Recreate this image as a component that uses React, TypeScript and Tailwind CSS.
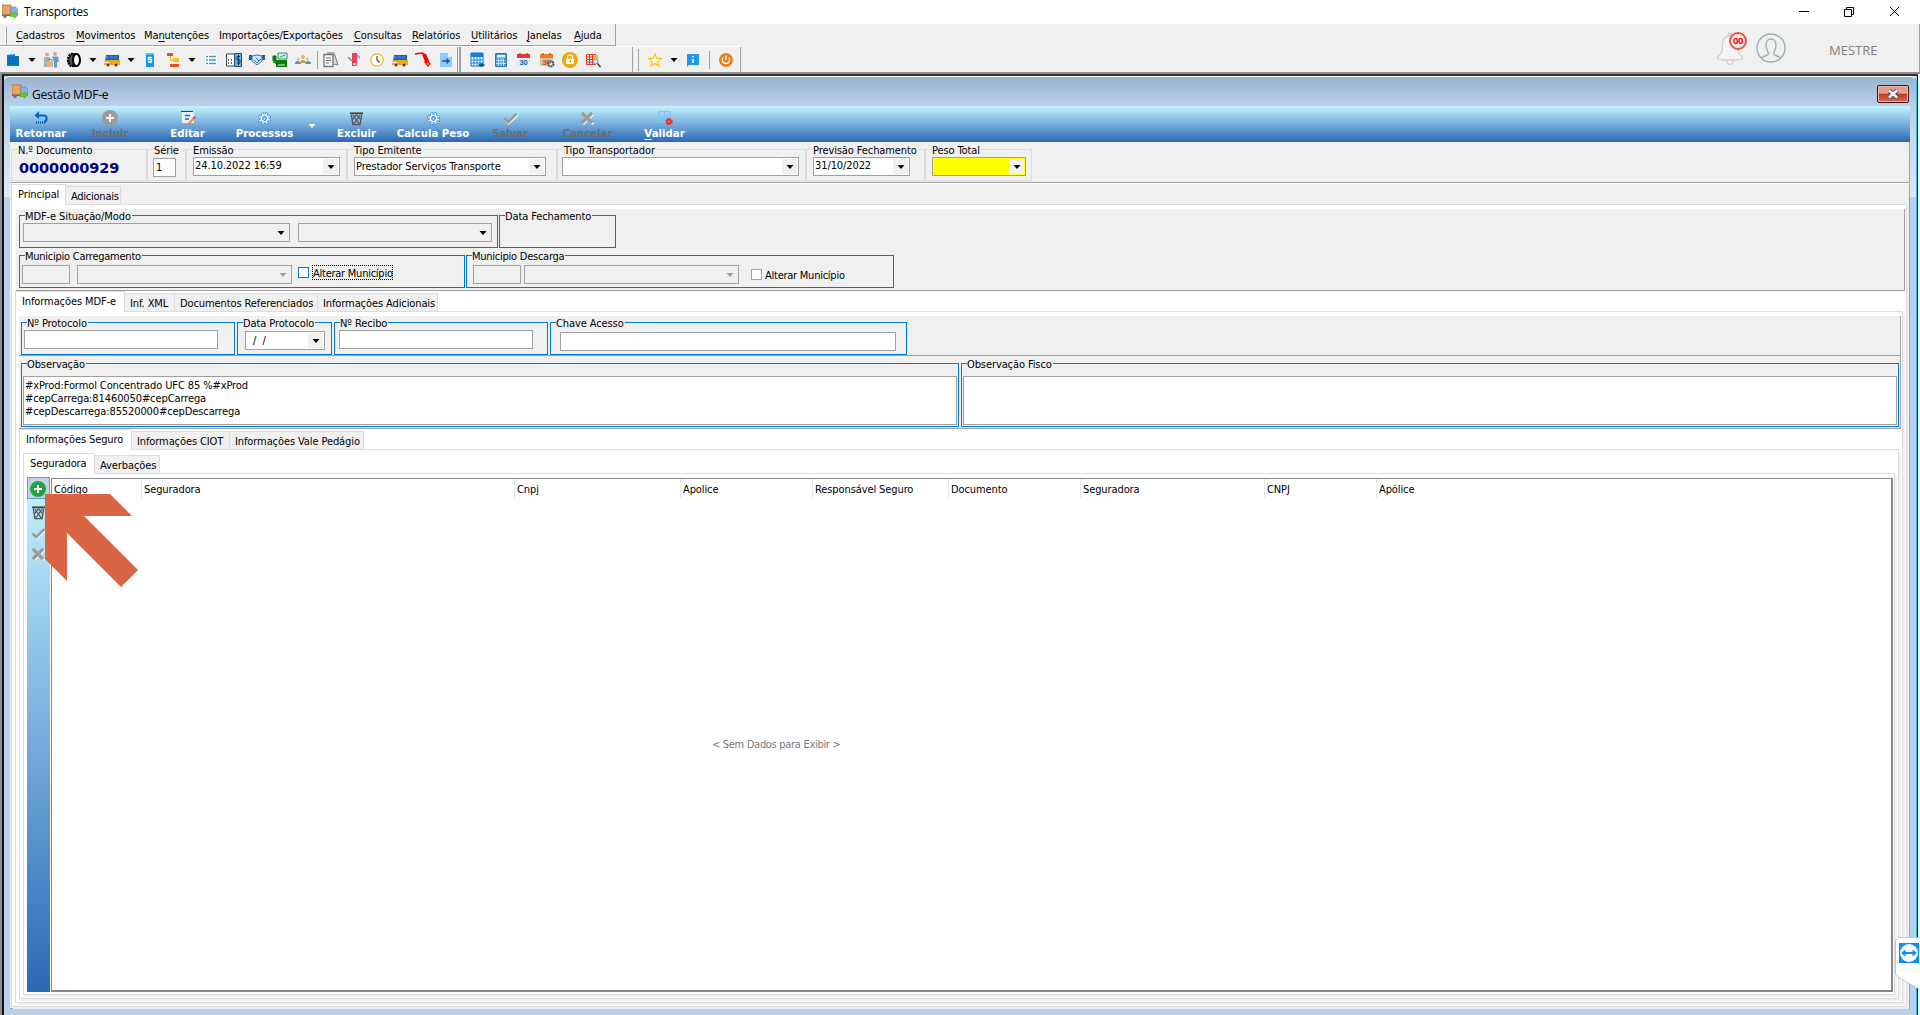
import type { ReactNode } from 'react';
import clsx from 'clsx';

/* ---------- icons ---------- */

function Svg({ children, s = 16 }: { children: ReactNode; s?: number }) {
  return (
    <svg width={s} height={s} viewBox="0 0 16 16" fill="none" className="shrink-0">
      {children}
    </svg>
  );
}

const Truck = () => (
  <Svg>
    <path d="M0 1h9v10H0z" fill="#e8a35c" stroke="#a9713c" strokeWidth=".8" />
    <path d="M9 3h5l1.500 3v5H9z" fill="#7db7e6" stroke="#4b88bb" strokeWidth=".6" />
    <path d="M0 10.500h9V12H0z" fill="#6b6b6b" />
    <circle cx="3" cy="12.500" r="1.700" fill="#777" />
    <path d="M8 9.500h4V7.500l4 3.500-4 3.500v-2H8z" fill="#6fc52b" stroke="#4d9a1d" strokeWidth=".5" />
  </Svg>
);

const Building = () => (
  <Svg>
    <path d="M2 3l8-1v2h4v10H2z" fill="#0a7fd6" />
    <path d="M2 6h12M2 8.500h12M2 11h12M5 4v10M8 4v10M11 4v10" stroke="#0560b0" strokeWidth=".8" />
  </Svg>
);

const People = () => (
  <Svg>
    <circle cx="4" cy="2.500" r="1.900" fill="#d9a877" />
    <circle cx="12" cy="2" r="1.900" fill="#d9a877" />
    <path d="M1 5h6v5H5v5H1z" fill="#9fb4bb" />
    <path d="M9 4.500h6l1 5-2 1v5h-3v-6z" fill="#5b9fd4" />
    <path d="M4 9h6v6H4z" fill="#e9b184" />
    <path d="M5 9V7.500h4V9" stroke="#b98058" />
  </Svg>
);

const Tire = () => (
  <Svg>
    <ellipse cx="6" cy="8" rx="3.800" ry="6" fill="#555" stroke="#000" strokeWidth="2.600" strokeDasharray="2 .7" />
    <ellipse cx="10.500" cy="8" rx="3.500" ry="6" fill="#fff" stroke="#000" strokeWidth="2" />
    <path d="M6 2h4M6 14h4" stroke="#000" strokeWidth="1.500" />
  </Svg>
);

const Bus = () => (
  <Svg>
    <path d="M2 3h13v6H1z" fill="#1c5fa8" />
    <path d="M2 4h3v3H2zM6 4h3v3H6zM10 4h3v3h-3z" fill="#2f7ed0" />
    <path d="M1 8h15v5H0z" fill="#f3a81c" />
    <path d="M1 10h4v1H1z" fill="#fff" />
    <circle cx="4" cy="13" r="1.500" fill="#444" />
    <circle cx="12" cy="13" r="1.500" fill="#444" />
  </Svg>
);

const MoneyBook = () => (
  <Svg>
    <path d="M4 1h8v14H4z" fill="#1596e8" />
    <path d="M4 1h8v2H4z" fill="#42c5f5" />
    <path d="M10 5.500H6.500v2h3v2.500H6" stroke="#fff" strokeWidth="1.300" />
  </Svg>
);

const OrgChart = () => (
  <Svg>
    <path d="M2 1h6v3H2z" fill="#e2502b" />
    <path d="M8 6h6v4H8z" fill="#f6c21f" />
    <path d="M5 12h9v3H5z" fill="#e2502b" />
    <path d="M5.500 4v4.500H8" stroke="#f6b21f" />
  </Svg>
);

const List = () => (
  <Svg>
    <path d="M2 2h12v12H2z" fill="#fff" />
    <path d="M3 4.500h2M3 8h2M3 11.500h2" stroke="#0fa7c0" strokeWidth="1.500" />
    <path d="M6 4.500h7M6 8h7M6 11.500h7" stroke="#3b97c9" strokeWidth="1.500" />
  </Svg>
);

const Ledger = () => (
  <Svg>
    <path d="M.5 2h8v12h-8z" fill="#fff" stroke="#444" />
    <path d="M8.500 1.500h7v13h-7z" fill="#5fb1ee" stroke="#244f74" />
    <path d="M2 8h1M5 8h1M2 11h1M5 11h1" stroke="#333" strokeWidth="1.500" />
    <path d="M14 4.500h-3V8h3v3h-3M12.500 3v10" stroke="#16395a" />
  </Svg>
);

const Handshake = () => (
  <Svg>
    <path d="M0 3h3v5H0zM13 3h3v5h-3z" fill="#1d5fa5" />
    <path d="M3 4l5-1 5 1v5l-5 4-5-4z" fill="#cfe4f6" stroke="#2d7cc4" />
    <path d="M5 8l3 3 4-4M7 6l3 3" stroke="#2d7cc4" />
  </Svg>
);

const Register = () => (
  <Svg>
    <path d="M6 1h9v6H6z" fill="#c9efe9" stroke="#15803d" strokeWidth=".8" />
    <path d="M8 5l5-2" stroke="#2f8fd0" />
    <path d="M4 8h11v7H4z" fill="#0b7a0b" />
    <path d="M1 4h3v5H1zM1 10h4v3" fill="#0b7a0b" stroke="#0b7a0b" />
    <path d="M6 13h7" stroke="#cfe" />
  </Svg>
);

const Team = () => (
  <Svg>
    <circle cx="8" cy="5" r="2" fill="#e8b366" />
    <circle cx="3.500" cy="7" r="1.600" fill="#e6c08a" />
    <circle cx="12.500" cy="7" r="1.600" fill="#e6c08a" />
    <path d="M5 11c0-4 6-4 6 0z" fill="#c3a33c" />
    <path d="M0 12c0-4 5-4 6 0zM10 12c1-4 6-4 6 0z" fill="#5a8fbf" />
  </Svg>
);

const Papers = () => (
  <Svg>
    <path d="M4 1h7l4 12-4-1" fill="#ddd" stroke="#777" />
    <path d="M1 2.500h9v12H1z" fill="#f4f4f4" stroke="#777" strokeWidth="1.300" />
    <path d="M3 6h5M3 8.500h5M3 11h3" stroke="#777" />
  </Svg>
);

const RedTool = () => (
  <Svg>
    <path d="M6 1h5v13H6z" fill="#ee3d55" />
    <path d="M7.500 11h2v2h-2z" fill="#fff" />
    <path d="M2 5l4 4M11 3l3 3" stroke="#9a8a8a" strokeWidth="1.500" />
  </Svg>
);

const Clock = () => (
  <Svg>
    <circle cx="8" cy="8" r="6.200" fill="#fff" stroke="#f0bd1b" strokeWidth="1.300" />
    <path d="M8 4v4l2.500 2.500" stroke="#444" strokeWidth="1.200" />
  </Svg>
);

const Pump = () => (
  <Svg>
    <path d="M0 2l7-1 4 3" stroke="#f00" strokeWidth="1.300" />
    <path d="M7 1l4 1 3 7-3 3-3-7z" fill="#f00" />
    <path d="M12 8l3 4-2 2-3-4z" stroke="#f00" strokeWidth="1.300" />
  </Svg>
);

const FileArrow = () => (
  <Svg>
    <path d="M2 1h8l4 4v10H2z" fill="#90caf9" />
    <path d="M10 1l4 4h-4z" fill="#e1f5fe" />
    <path d="M4 9h7M8.500 6.500L11 9l-2.500 2.500" stroke="#1557b0" strokeWidth="1.300" />
  </Svg>
);

const BlueCalendar = () => (
  <Svg>
    <path d="M1 1h12v13H1z" fill="#fff" stroke="#0a6cc0" />
    <path d="M1 1h12v4H1z" fill="#0a7fd6" />
    <path d="M1 8h12M1 11h12M4 5v9M7 5v9M10 5v9" stroke="#0a8ad6" />
    <ellipse cx="11.500" cy="13" rx="3" ry="1.700" fill="#075a86" />
  </Svg>
);

const Calculator = () => (
  <Svg>
    <path d="M2.500 1.500h11v13h-11z" fill="#4b9ad8" stroke="#2676b9" />
    <path d="M4 3h8v2.500H4z" fill="#e6f3fc" />
    <path d="M5.500 6.500V14M8 6.500V14M10.500 6.500V14M3 8.500h10M3 11.500h10" stroke="#dceefa" strokeWidth=".8" />
    <path d="M11 7h1.500v1.500H11z" fill="#c63d2f" />
  </Svg>
);

const Calendar30 = ({ gear }: { gear?: boolean }) => (
  <Svg>
    <path d="M1 2h13v4H1z" fill={gear ? '#f07c1e' : '#e5392e'} />
    <path d="M1 6h13v8H1z" fill={gear ? '#d8c0a8' : '#dceefb'} />
    <path d="M4 1v2M11 1v2" stroke="#8a3029" />
    <text x="7.500" y="12.500" textAnchor="middle" fontFamily="Liberation Sans" fontWeight="700" fontSize="7.500" fill={gear ? '#d4452e' : '#1b5fa8'}>
      30
    </text>
    {gear && <circle cx="12" cy="12" r="2.500" fill="#eee" stroke="#456" strokeWidth="2" strokeDasharray="2 .5" />}
  </Svg>
);

const Lock = () => (
  <Svg>
    <circle cx="8" cy="8" r="8" fill="#e6ac14" />
    <path d="M4 7h8v5H4z" fill="#fff" />
    <path d="M5.500 7V5c0-2.500 5-2.500 5 0v2" stroke="#fff" strokeWidth="1.200" />
    <path d="M7.500 8.500h1.500v2H7.500z" fill="#c58b00" />
  </Svg>
);

const GridSearch = () => (
  <Svg>
    <path d="M1.500 2.500h9v10h-9zM1.500 5h9M1.500 7.500h9M1.500 10h9M4.500 2.500v10M7.500 2.500v10" stroke="#e23a2a" />
    <path d="M9 3h4v5H9z" fill="#f4bd25" />
    <circle cx="10.500" cy="9.500" r="2.500" fill="#cfe8f8" stroke="#6c9ab8" />
    <path d="M12.500 11.500l3 3.500" stroke="#333" strokeWidth="1.300" />
  </Svg>
);

const Star = () => (
  <Svg>
    <path d="M8 2l1.700 4.200 4.600.3-3.500 3 1.100 4.500L8 11.500 4.100 14l1.100-4.500-3.500-3 4.600-.3z" fill="#fffbe6" stroke="#fdc812" strokeWidth="1.300" />
  </Svg>
);

const Info = () => (
  <Svg>
    <path d="M2 2h12v11H4l-2 2z" fill="#2196f3" />
    <path d="M8 4v1.500M8 7v4" stroke="#fff" strokeWidth="1.600" />
  </Svg>
);

const Power = () => (
  <Svg>
    <circle cx="8" cy="8" r="7" fill="#e6801f" />
    <path d="M5 5.500c-2 4 1 6 3 6s5-2 3-6M8 3.500v4.500" stroke="#fff" strokeWidth="1.300" />
  </Svg>
);

const Undo = () => (
  <Svg>
    <path d="M6 1L1.500 5.500 6 9z" fill="#0d63c4" />
    <path d="M3 5.500h8c3.500 0 3.500 5.500 0 6.500" stroke="#0d63c4" strokeWidth="2" />
    <path d="M3 12.500h10" stroke="#0d63c4" strokeWidth="2.500" strokeDasharray="1 1" />
  </Svg>
);

const Plus = ({ fill }: { fill: string }) => (
  <Svg>
    <circle cx="8" cy="8" r="8" fill={fill} />
    <path d="M8 4v8M4 8h8" stroke="#fff" strokeWidth="2" />
  </Svg>
);

const Edit = () => (
  <Svg>
    <path d="M2 1h12v12H2z" fill="#e6f0fb" />
    <path d="M1 1.500h12" stroke="#2438b8" />
    <path d="M5 5.500h5M5 9h4" stroke="#1667c9" strokeWidth="1.500" />
    <path d="M8.500 14l5.500-6" stroke="#f5941f" strokeWidth="2.200" />
    <path d="M13.500 8.500l1.500-1.800" stroke="#d8436b" strokeWidth="2.200" />
  </Svg>
);

const Gear = () => (
  <Svg s={13}>
    <circle cx="8" cy="8" r="6.300" stroke="#2d8fd6" strokeWidth="3.200" strokeDasharray="3.400 1.550" />
    <circle cx="8" cy="8" r="5.400" fill="#fff" stroke="#2d8fd6" strokeWidth="1" />
    <circle cx="8" cy="8" r="6.100" stroke="#fff" strokeWidth="1.900" strokeDasharray="2 2.790" strokeDashoffset="-.6" />
    <circle cx="8" cy="8" r="2.200" fill="#bfe6fb" stroke="#2d8fd6" strokeWidth="1.500" />
  </Svg>
);

const Bin = () => (
  <Svg s={15}>
    <path d="M1 2.500h14" stroke="#444" strokeWidth="2" />
    <path d="M2.500 4l1.700 10.500h7.600L13.500 4" stroke="#555" strokeWidth="1.500" />
    <path d="M4 4l7 10M12 4L5 14M8 4l4 5M8 4L4 9" stroke="#555" strokeWidth="1.300" />
  </Svg>
);

const Check = () => (
  <Svg s={15}>
    <path d="M2 9l4 4 9.500-9" stroke="#fff" strokeWidth="2.500" />
    <path d="M1.500 8l4 4L14.500 3" stroke="#9b9b9b" strokeWidth="2.800" />
  </Svg>
);

const Cross = () => (
  <Svg s={15}>
    <path d="M3 3l11 11M14 3L3 14" stroke="#fff" strokeWidth="3" />
    <path d="M2 2l11 11M13 2L2 13" stroke="#9b9b9b" strokeWidth="3.500" />
  </Svg>
);

const Validate = () => (
  <Svg>
    <path d="M2 1.500h11v11H2zM2 7h11M7.500 1.500v11" stroke="#7ec3fa" strokeWidth="1.200" />
    <circle cx="12" cy="11.500" r="3" stroke="#d83b2b" strokeWidth="1.300" strokeDasharray="1.500 .9" />
    <circle cx="12" cy="11.500" r="1.700" fill="#f3b9b0" stroke="#d83b2b" strokeWidth="2" />
  </Svg>
);

function Caret({ color = '#000' }: { color?: string }) {
  return (
    <svg width="8" height="4" viewBox="0 0 8 4" className="shrink-0">
      <path d="M.5 0h7L4 4z" fill={color} />
    </svg>
  );
}

/* ---------- form pieces ---------- */

interface GroupProps {
  label: string;
  className?: string;
  blue?: boolean;
  children?: ReactNode;
}

function Group({ label, className, blue, children }: GroupProps) {
  return (
    <fieldset className={clsx('min-w-0 shrink-0 border', blue ? 'border-[#0078d7]' : 'border-[#dcdcdc]', className)}>
      <legend className={clsx('h-[13px] leading-[15px] whitespace-nowrap', blue ? 'ml-[5px] pr-px' : 'ml-1.5 pr-px')}>{label}</legend>
      {children}
    </fieldset>
  );
}

interface ComboProps {
  value?: string;
  className?: string;
  disabled?: boolean;
  flat?: boolean;
  date?: boolean;
}

function Combo({ value, className, disabled, flat, date }: ComboProps) {
  return (
    <div className={clsx('flex h-[19px] shrink-0 items-center border border-[#a0a0a0] pl-px', flat ? 'bg-[#f0f0f0]' : 'bg-white', className)}>
      <span className={clsx('flex-1 whitespace-pre', date ? 'pb-px' : 'pt-px')}>{value}</span>
      <span className="mr-px flex h-[15px] w-[15px] items-center justify-center bg-[#f0f0f0]">
        <Caret color={disabled ? '#a0a0a0' : '#000'} />
      </span>
    </div>
  );
}

function Box({ className, children }: { className?: string; children?: ReactNode }) {
  return <div className={clsx('shrink-0 border border-[#a0a0a0]', className)}>{children}</div>;
}

interface TabsProps {
  tabs: { label: string; w: string }[];
  className?: string;
}

function Tabs({ tabs, className }: TabsProps) {
  return (
    <div className={clsx('flex h-[21px] shrink-0 items-end border-b border-[#dcdcdc]', className)}>
      {tabs.map((t, i) => (
        <div
          key={t.label}
          className={clsx(
            'flex shrink-0 justify-start border-t border-r border-[#dcdcdc] whitespace-nowrap',
            t.w,
            i === 0 ? '-mb-px h-[21px] bg-white pl-1.5 leading-[19px]' : 'h-[18px] bg-[#f0f0f0] pl-[5px] leading-[20px]',
          )}
        >
          {t.label}
        </div>
      ))}
    </div>
  );
}

/* Tab page frame: light line all round, pale shade on the right and bottom */
const frame = 'flex min-h-0 flex-1 flex-col border-x border-b border-[#dcdcdc] mr-[3px] mb-[3px] shadow-[2px_2px_0_#f0f0f0]';

const menus = [
  ['', 'C', 'adastros', 'w-[60px]'],
  ['', 'M', 'ovimentos', 'w-[68px]'],
  ['Ma', 'n', 'utenções', 'w-[75px]'],
  ['Importações/Exportações', '', '', 'w-[135px]'],
  ['', 'C', 'onsultas', 'w-[58px]'],
  ['', 'R', 'elatórios', 'w-[59px]'],
  ['', 'U', 'tilitários', 'w-[56px]'],
  ['', 'J', 'anelas', 'w-[47px]'],
  ['', 'A', 'juda', 'w-[40px]'],
];

const actions: { label: string; w: string; icon: ReactNode; off?: boolean; key?: boolean; menu?: boolean }[] = [
  { label: 'Retornar', w: 'w-[62px]', icon: <Undo /> },
  { label: 'Incluir', w: 'w-[76px]', icon: <Plus fill="#9b9b9b" />, off: true },
  { label: 'Editar', w: 'w-[79px]', icon: <Edit /> },
  { label: 'Processos', w: 'w-[75px]', icon: <Gear />, menu: true },
  { label: 'Excluir', w: 'w-[71px]', icon: <Bin /> },
  { label: 'Calcula Peso', w: 'w-[82px]', icon: <Gear /> },
  { label: 'Salvar', w: 'w-[72px]', icon: <Check />, off: true, key: true },
  { label: 'Cancelar', w: 'w-[83px]', icon: <Cross />, off: true },
  { label: 'Validar', w: 'w-[71px]', icon: <Validate />, key: true },
];

const columns = [
  ['Código', 'w-[90px]'],
  ['Seguradora', 'w-[373px]'],
  ['Cnpj', 'w-[166px]'],
  ['Apolice', 'w-[132px]'],
  ['Responsável Seguro', 'w-[136px]'],
  ['Documento', 'w-[132px]'],
  ['Seguradora', 'w-[184px]'],
  ['CNPJ', 'w-[112px]'],
];

function TopBar() {
  return (
    <>
      <div className="flex h-6 shrink-0 items-center pl-0.5 font-['Open_Sans',sans-serif] text-[12px] tracking-[-0.300px] [font-stretch:normal]">
        <Truck />
        <span className="ml-[6px] flex-1">Transportes</span>
        <svg width="102" height="12" viewBox="0 0 102 12" fill="none" stroke="#000" className="mr-5">
          <path d="M1 5.500h10M46.500 3.500h7v7h-7zM48.500 3.500v-2h7v7h-2M92 1l9 9M101 1l-9 9" />
        </svg>
      </div>
      <div className="flex h-12 shrink-0 justify-between bg-[#f0f0f0]">
        <div className="flex flex-col">
          <div className="flex h-[22px] w-[616px] items-center border-r border-b border-[#a0a0a0] pt-[3px] pl-[5px]">
            <span className="mr-[9px] h-[18px] w-0.5 shrink-0 border-r border-[#a0a0a0] bg-white" />
            {menus.map(([pre, key, post, w], i) => (
              <span key={i} className={clsx('shrink-0 whitespace-nowrap', w)}>
                {pre}
                <span className="underline underline-offset-2">{key}</span>
                {post}
              </span>
            ))}
          </div>
          <div className="flex h-[26px] items-center gap-[7px] border-t border-white pl-[5px]">
            <Building />
            <Caret />
            <People />
            <Tire />
            <Caret />
            <Bus />
            <Caret />
            <MoneyBook />
            <OrgChart />
            <Caret />
            <List />
            <Ledger />
            <Handshake />
            <Register />
            <Team />
            <span className="-mr-0.5 -ml-px h-[18px] w-px bg-[#a0a0a0]" />
            <Papers />
            <RedTool />
            <Clock />
            <Bus />
            <Pump />
            <FileArrow />
            <span className="mr-[-5px] -ml-1 h-[25px] w-1 border-r-2 border-l border-[#a0a0a0]" />
            <span className="w-0" />
            <BlueCalendar />
            <Calculator />
            <Calendar30 />
            <Calendar30 gear />
            <Lock />
            <GridSearch />
            <span className="ml-6 h-[25px] w-px bg-[#a0a0a0]" />
            <span className="mr-px -ml-0.5 h-[22px] w-px bg-[#a0a0a0]" />
            <Star />
            <Caret />
            <Info />
            <span className="mr-px ml-px h-[18px] w-px bg-[#a0a0a0]" />
            <Power />
            <span className="-ml-px h-[25px] w-px bg-[#a0a0a0]" />
          </div>
        </div>
        <div className="flex h-12 items-center border-r border-[#a0a0a0] pr-[42px] font-['Open_Sans',sans-serif] tracking-normal [font-stretch:normal]">
          <div className="relative mt-px mr-2.5">
            <svg width="30" height="34" viewBox="0 0 30 34" fill="#f4f4f4" stroke="#cfcfcf" strokeWidth="1.300">
              <path d="M11 29c0 4.500 6 4.500 6 0M12 4c0-4 4-4 4 0" />
              <path d="M14 3.500C8 4 6.500 9 6.500 13c0 7-1 9-5 12-1 2 2 3 6 3h13c4 0 7-1 6-3-4-3-5-5-5-12 0-4-1.500-9-7.500-9.500z" />
            </svg>
            <span className="absolute top-0 left-[13px] flex h-[18px] w-[18px] items-center justify-center rounded-full border-2 border-[#ef5345] bg-[#eee] text-[9.500px] font-bold tracking-[-0.500px] text-[#f00]">
              00
            </span>
          </div>
          <svg width="30" height="30" viewBox="0 0 30 30" fill="none" stroke="#9db0b0" strokeWidth="1.400">
            <circle cx="15" cy="15" r="14" />
            <path d="M5.500 25c1-2 6-2 7-4 0-3-2.500-4-2.500-9 0-8 10-8 10 0 0 5-2.500 6-2.500 9 1 2 6 2 7 4" />
          </svg>
          <span className="ml-[43px] w-12 pt-1 text-[13px] whitespace-nowrap text-[#808080]">MESTRE</span>
        </div>
      </div>
    </>
  );
}

function HeaderFields() {
  return (
    <div className="flex h-[41px] shrink-0 border-r border-b border-[#a0a0a0] bg-[#f0f0f0] pt-px pl-px">
      <Group label="N.º Documento" className="h-[38px] w-[136px]">
        <div className="pt-0.5 pl-[7px] font-['DejaVu_Sans',sans-serif] text-[14.500px] leading-5 font-bold tracking-[-0.050px] text-[#000080] [font-stretch:normal]">
          0000000929
        </div>
      </Group>
      <Group label="Série" className="h-[38px] w-[39px]">
        <Box className="mt-0.5 ml-[5px] h-[19px] w-[23px] bg-white pl-0.5 leading-[18px]">1</Box>
      </Group>
      <Group label="Emissão" className="h-[38px] w-[161px]">
        <Combo date value="24.10.2022 16:59" className="mt-px ml-1.5 w-[147px]" />
      </Group>
      <Group label="Tipo Emitente" className="h-[38px] w-[210px]">
        <Combo value="Prestador Serviços Transporte" className="mt-px ml-1.5 w-[192px]" />
      </Group>
      <Group label="Tipo Transportador" className="h-[38px] w-[249px]">
        <Combo className="mt-px ml-1 w-[237px]" />
      </Group>
      <Group label="Previsão Fechamento" className="h-[38px] w-[119px]">
        <Combo date value="31/10/2022" className="mt-px ml-1.5 w-[97px]" />
      </Group>
      <Group label="Peso Total" className="h-[38px] w-[107px]">
        <Combo className="mt-px ml-1.5 w-[94px] bg-[#ffff00]!" />
      </Group>
    </div>
  );
}

function MainFields() {
  return (
    <div className="mr-px ml-px flex h-[82px] shrink-0 flex-col border-r border-b border-[#a0a0a0] bg-[#f0f0f0] pl-[3px]">
      <div className="flex h-10 gap-px">
        <Group blue label="MDF-e Situação/Modo" className="h-[39px] w-[479px]">
          <div className="mt-px ml-[3px] flex gap-2">
            <Combo flat className="w-[267px]" />
            <Combo flat className="w-[194px]" />
          </div>
        </Group>
        <Group blue label="Data Fechamento" className="h-[39px] w-[117px]" />
      </div>
      <div className="flex h-10 gap-px">
        <Group blue label="Municipio Carregamento" className="h-[39px] w-[446px] tracking-[-0.250px]">
          <div className="mt-[3px] ml-0.5 flex">
            <Box className="h-[19px] w-12" />
            <Combo flat disabled className="ml-[7px] w-[215px]" />
            <Box className="mt-0.5 ml-1.5 h-[11px] w-[11px] border-[#0078d7]! bg-white" />
            <span className="ml-[3px] h-[15px] w-[81px] border border-dotted border-black leading-[15px] whitespace-nowrap">Alterar Município</span>
          </div>
        </Group>
        <Group blue label="Municipio Descarga" className="h-[39px] w-[428px] tracking-[-0.250px]">
          <div className="mt-[3px] ml-1.5 flex">
            <Box className="h-[19px] w-12" />
            <Combo flat disabled className="ml-[3px] w-[215px]" />
            <Box className="mt-1 ml-3 h-[11px] w-[11px] bg-white" />
            <span className="mt-[3px] ml-[3px] leading-[16px] whitespace-nowrap">Alterar Município</span>
          </div>
        </Group>
      </div>
    </div>
  );
}

function ProtocolFields() {
  return (
    <div className="mr-px flex h-10 shrink-0 gap-0.5 border-r border-b border-[#a0a0a0] bg-[#f0f0f0] pl-0.5">
      <Group blue label="Nº Protocolo" className="h-[39px] w-[214px]">
        <Box className="mt-px ml-0.5 h-[19px] w-[194px] bg-white" />
      </Group>
      <Group blue label="Data Protocolo" className="h-[39px] w-[95px]">
        <Combo value="  /  /" className="mt-0.5 ml-[7px] w-20" />
      </Group>
      <Group blue label="Nº Recibo" className="h-[39px] w-[214px]">
        <Box className="mt-px ml-1 h-[19px] w-[194px] bg-white" />
      </Group>
      <Group blue label="Chave Acesso" className="h-[39px] w-[357px]">
        <Box className="mt-[3px] ml-[9px] h-[19px] w-[336px] bg-white" />
      </Group>
    </div>
  );
}

function Notes() {
  return (
    <div className="mr-px flex h-[73px] shrink-0 gap-0.5 border-r border-b border-[#a0a0a0] bg-[#f0f0f0] pt-px pr-px pl-0.5">
      <Group blue label="Observação" className="h-[70px] w-[938px]">
        <Box className="mx-px mt-1.5 h-[49px] bg-white pt-0.5 pl-px leading-[13px] whitespace-pre">
          {'#xProd:Formol Concentrado UFC 85 %#xProd\n#cepCarrega:81460050#cepCarrega\n#cepDescarrega:85520000#cepDescarrega'}
        </Box>
      </Group>
      <Group blue label="Observação Fisco" className="h-[70px] flex-1">
        <Box className="mx-px mt-1.5 h-[49px] bg-white" />
      </Group>
    </div>
  );
}

function InsuranceGrid() {
  return (
    <div className="mt-[3px] mr-px mb-0.5 ml-[3px] flex min-h-0 flex-1">
      <div className="flex w-[23px] shrink-0 flex-col items-center bg-gradient-to-b from-[#c5f4ff] to-[#2c69b5]">
        <div className="flex h-[22px] w-full items-center justify-center border border-[#6d94d6] bg-[#c1d2ee] pt-px pr-px">
          <Plus fill="#25a13e" />
        </div>
        <div className="mt-1.5 mr-px flex flex-col gap-[6px]">
          <Bin />
          <Check />
          <Cross />
        </div>
      </div>
      <div className="mt-px ml-px flex flex-1 flex-col border-2 border-t border-l border-[#828790] bg-white">
        <div className="flex h-[19px] shrink-0 leading-[22px]">
          {columns.map(([label, w], i) => (
            <div key={i} className={clsx('shrink-0 border-r border-[#e5e5e5] pl-0.5', w)}>
              {label}
            </div>
          ))}
          <div className="pl-0.5">Apólice</div>
        </div>
        <div className="mt-[240px] ml-[660px] tracking-[-0.300px] text-[#777]">&lt; Sem Dados para Exibir &gt;</div>
      </div>
    </div>
  );
}

function MdfWindow() {
  return (
    <div className="mr-0.5 flex min-h-0 flex-1 flex-col border-x-2 border-t-2 border-r border-l-[#111] border-t-[#333] border-r-black bg-[#b9d1ea]">
      <div className="flex min-h-0 flex-1 flex-col rounded-t-md border-t border-r border-t-white border-r-[#19c5f5] bg-[linear-gradient(180deg,#b9d1ea_29px,#dfe9f6_120px,#b9d1ea_120px)]">
        <div className="flex h-[29px] shrink-0 items-center rounded-t-md bg-gradient-to-b from-[#99b4d1] to-[#b9d1ea] pr-[7px] pl-2">
          <Truck />
          <span className="ml-1 flex-1 pt-[7px] font-['Open_Sans',sans-serif] text-[12px] tracking-[-0.200px] [font-stretch:normal]">Gestão MDF-e</span>
          <div className="mt-1 flex h-[18px] w-8 items-center justify-center rounded-[2px] border border-[#43101c] bg-gradient-to-b from-[#e59c8c] from-45% via-[#b93a20] via-50% to-[#d0695a] shadow-[inset_0_0_0_1px_#f0b8ac]">
            <svg width="12" height="10" viewBox="0 0 12 10" fill="none">
              <path d="M2 1.500l8 7M10 1.500l-8 7" stroke="#4d5165" strokeWidth="4.500" />
              <path d="M2 1.500l8 7M10 1.500l-8 7" stroke="#fff" strokeWidth="2.400" />
            </svg>
          </div>
        </div>
        <div className="mx-1.5 mb-[6px] flex min-h-0 flex-1 flex-col bg-[#f0f0f0]">
          <div className="flex h-9 shrink-0 bg-gradient-to-b from-[#c5f4ff] to-[#2c69b5] font-['DejaVu_Sans',sans-serif] text-[10.200px] font-bold tracking-normal text-white [font-stretch:normal]">
            {actions.map((a) => (
              <div key={a.label} className="flex">
                <div className={clsx('flex shrink-0 flex-col items-center', a.w, a.off && 'text-[#6d6d6d]')}>
                  <span className="mt-1 mb-px flex h-4 items-center">{a.icon}</span>
                  <span className="leading-[14px] whitespace-nowrap">
                    {a.key ? <span className="underline underline-offset-2">{a.label[0]}</span> : a.label[0]}
                    {a.label.slice(1)}
                  </span>
                </div>
                {a.menu && (
                  <span className="flex w-[19px] items-center justify-center pt-1">
                    <Caret color="#fff" />
                  </span>
                )}
              </div>
            ))}
          </div>
          <HeaderFields />
          <Body />
        </div>
      </div>
    </div>
  );
}

function Body() {
  return (
    <div className="flex min-h-0 flex-1 flex-col border-t border-r border-b border-[#a0a0a0] border-t-white pl-px">
      <Tabs
        tabs={[
          { label: 'Principal', w: 'w-[55px] border-l' },
          { label: 'Adicionais', w: 'w-[55px] tracking-[-0.250px]' },
        ]}
        className="mr-0.5"
      />
      <div className={clsx(frame, 'mr-0.5! mb-px! bg-white pt-1 pl-[3px]')}>
        <MainFields />
        <Tabs
          tabs={[
            { label: 'Informações MDF-e', w: 'w-[110px] border-l' },
            { label: 'Inf. XML', w: 'w-[50px]' },
            { label: 'Documentos Referenciados', w: 'w-[143px]' },
            { label: 'Informações Adicionais', w: 'w-[120px]' },
          ]}
          className="mr-[3px]"
        />
        <div className={clsx(frame, 'pt-1 pl-[3px]')}>
          <ProtocolFields />
          <Notes />
          <Tabs
            tabs={[
              { label: 'Informações Seguro', w: 'w-[113px] border-l' },
              { label: 'Informações CIOT', w: 'w-[98px]' },
              { label: 'Informações Vale Pedágio', w: 'w-[134px]' },
            ]}
            className="mr-[3px]"
          />
          <div className={clsx(frame, 'pt-[3px] pl-[3px]')}>
            <Tabs
              tabs={[
                { label: 'Seguradora', w: 'w-[72px] border-l' },
                { label: 'Averbações', w: 'w-[65px]' },
              ]}
              className="mr-[3px]"
            />
            <div className={frame}>
              <InsuranceGrid />
            </div>
          </div>
        </div>
      </div>
    </div>
  );
}

export default function App() {
  return (
    <div className="relative flex h-[1015px] w-full flex-col overflow-hidden bg-white font-['DejaVu_Sans_Condensed','DejaVu_Sans',sans-serif] text-[11px] leading-[14px] tracking-[-0.100px] text-black [font-stretch:condensed]">
      <TopBar />
      <div className="flex min-h-0 flex-1 flex-col border-t-2 border-l-2 border-[#8f8f8f]">
        <MdfWindow />
      </div>

      {/* Pointer arrow over the "add" button */}
      <svg width="94" height="94" viewBox="0 0 94 94" className="absolute top-[494px] left-[45px]">
        <path d="M0 0h65l22 22H39l54 54-17 17-54-54v48L0 65z" fill="#d96444" />
      </svg>

      {/* Remote session handle */}
      <svg width="25" height="54" viewBox="0 0 25 54" className="absolute top-[937px] left-[1895px]">
        <path d="M26 .5H3L.5 3v34l4 4L26 53z" fill="#fff" stroke="#c8c8c8" />
        <path d="M4 6h20v20H4z" fill="#0d8ef5" />
        <circle cx="14" cy="16" r="9" fill="#fff" />
        <path d="M6 16l4.500-3.500v2.500h7v-2.500L22 16l-4.500 3.500V17h-7v2.500z" fill="#0d8ef5" />
      </svg>
    </div>
  );
}
